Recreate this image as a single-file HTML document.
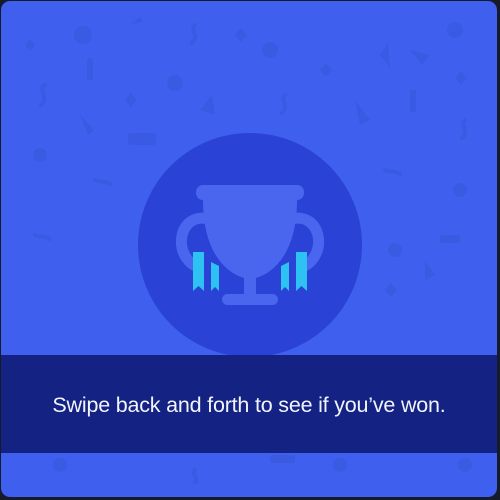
<!DOCTYPE html>
<html><head><meta charset="utf-8"><style>
html,body{margin:0;padding:0;width:500px;height:500px;background:#161b2a;overflow:hidden}
.card{position:absolute;left:1px;top:1px;width:496px;height:496px;border-radius:9px;background:#3f5fee;overflow:hidden}
.banner{position:absolute;left:0;top:354px;width:496px;height:98px;background:#132283;}
.banner div{position:absolute;left:0;right:0;top:38px;text-align:center;color:#f2f4fb;font-family:"Liberation Sans",sans-serif;font-size:21.5px;letter-spacing:-0.2px}
svg{position:absolute;left:0;top:0}
</style></head><body>
<div class="card">
<svg width="496" height="496" viewBox="1 1 496 496">
<g fill="#3b59e0" opacity="0.8">
<circle cx="83" cy="35" r="9"/><circle cx="270" cy="50" r="8"/><circle cx="175" cy="83" r="8"/><circle cx="455" cy="30" r="8"/><circle cx="40" cy="155" r="7"/><circle cx="460" cy="190" r="7"/><circle cx="395" cy="250" r="7"/><circle cx="60" cy="465" r="7"/><circle cx="340" cy="465" r="7"/><circle cx="465" cy="465" r="7"/>
<path d="M25 45l5-6 5 6-5 6z"/><path d="M125 100l6-7 6 7-6 7z"/><path d="M320 70l6-7 6 7-6 7z"/><path d="M455 78l6-7 6 7-6 7z"/><path d="M235 35l6-7 6 7-6 7z"/><path d="M385 290l6-7 6 7-6 7z"/>
<path d="M130 25l10-8 3 4z"/><path d="M200 110l12-15 3 20z"/><path d="M380 55l8-12 2 25z"/><path d="M410 50l20 5-8 10z"/><path d="M355 100l5 25 10-5z"/><path d="M80 115l8 20 6-5z"/><path d="M425 260l10 15-10 5z"/>
<rect x="87" y="58" width="6" height="22" rx="2"/><rect x="128" y="133" width="28" height="12" rx="3"/><rect x="410" y="90" width="6" height="22" rx="2"/><rect x="440" y="235" width="20" height="8" rx="2"/><rect x="270" y="455" width="25" height="8" rx="2"/>
</g>
<g fill="none" stroke="#3b59e0" stroke-width="4" stroke-linecap="round" opacity="0.8">
<path d="M45 85c-8 5 5 12-4 20"/><path d="M195 25c-6 5 5 10-3 18"/><path d="M285 95c-6 5 5 10-3 18"/><path d="M465 120c-6 5 5 10-3 18"/><path d="M95 180c5 3 10 0 15 4"/><path d="M35 235c5 3 10 0 15 4"/><path d="M385 170c5 3 10 0 15 4"/><path d="M195 470c-5 4 5 8 0 12"/>
</g>
<circle cx="250" cy="245" r="112" fill="#2a42d6"/>
<g fill="none" stroke="#4a66ee" stroke-width="11">
<path d="M212 220 C178 208 170 258 200 268"/>
<path d="M288 220 C322 208 330 258 300 268"/>
</g>
<g fill="#4a66ee">
<rect x="196" y="185" width="108" height="15" rx="7"/>
<path d="M203 200 H297 C297 250 276 272 256 278 V296 H244 V278 C224 272 203 250 203 200Z"/>
<rect x="222" y="294" width="56" height="11" rx="5.5"/>
</g>
<g fill="#2ec2f2">
<path d="M193 252 H204 V291 L198.5 286 L193 291Z"/>
<path d="M211 262 L219 266 V291 L215 287 L211 291Z"/>
<path d="M296 252 H307 V291 L301.5 286 L296 291Z"/>
<path d="M289 262 L281 266 V291 L285 287 L289 291Z"/>
</g>
</svg>
<div class="banner"><div>Swipe back and forth to see if you’ve won.</div></div>
</div>
</body></html>
